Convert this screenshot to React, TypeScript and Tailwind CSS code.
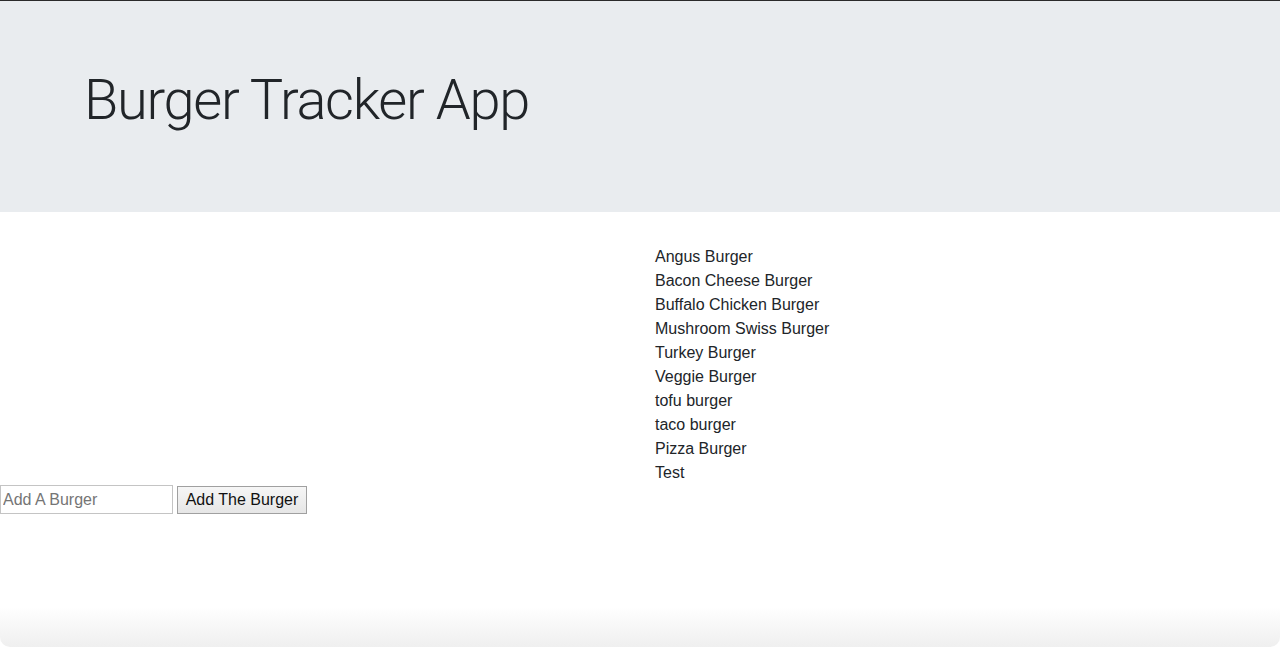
const BURGERS = [
  "Angus Burger",
  "Bacon Cheese Burger",
  "Buffalo Chicken Burger",
  "Mushroom Swiss Burger",
  "Turkey Burger",
  "Veggie Burger",
  "tofu burger",
  "taco burger",
  "Pizza Burger",
  "Test",
];

export default function App() {
  return (
    <div className="relative h-[647px] overflow-hidden bg-white border-t border-[#2a2a2a] text-[#212529] font-['Liberation_Sans',Arial,sans-serif]">
      {/* Jumbotron */}
      <div className="h-[211px] bg-[#e9ecef] flex items-center pl-[84px] pb-[12px]">
        <h1 className="text-[56px] font-light leading-[1.2] tracking-[-1.3px] font-['Roboto',sans-serif]">Burger Tracker App</h1>
      </div>

      {/* Burger list */}
      <div className="grid grid-cols-2 mt-[33px]">
        <div />
        <ul className="pl-[15px] text-[16px] leading-[24px]">
          {BURGERS.map((b) => (
            <li key={b}>{b}</li>
          ))}
        </ul>
      </div>

      {/* Add form */}
      <form className="flex items-center gap-[4px]" onSubmit={(e) => e.preventDefault()}>
        <input
          type="text"
          placeholder="Add A Burger"
          className="w-[173px] h-[29px] border border-[#c4c4c4] px-[2px] text-[16px] placeholder:text-[#757575] outline-none"
        />
        <button
          type="submit"
          className="h-[28px] w-[130px] border border-[#a0a0a0] bg-gradient-to-b from-[#f6f6f6] to-[#e6e6e6] text-[16px] text-[#111]"
        >
          Add The Burger
        </button>
      </form>

      {/* bottom window shadow */}
      <div className="absolute inset-x-0 bottom-0 h-[40px] bg-gradient-to-b from-transparent to-[#efefef] rounded-b-[10px] pointer-events-none" />
    </div>
  );
}
